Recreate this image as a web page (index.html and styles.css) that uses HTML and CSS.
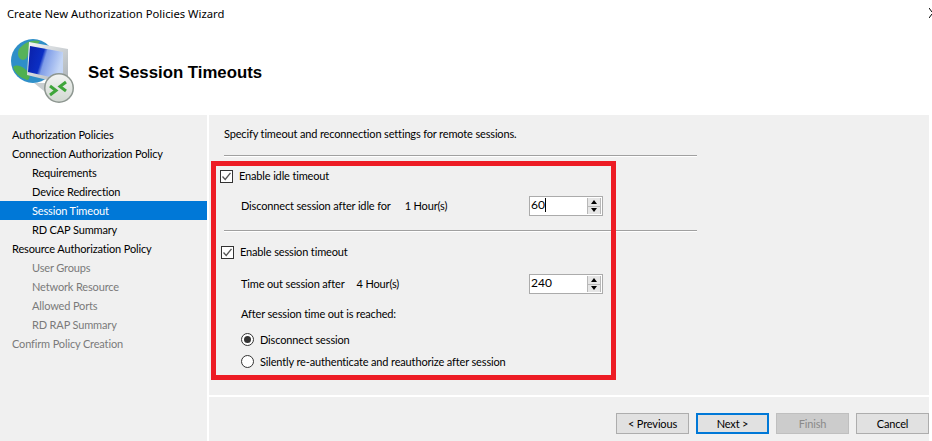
FILE: index.html
```html
<!DOCTYPE html>
<html lang="en">
<head>
    <meta charset="UTF-8">
    <meta name="viewport" content="width=device-width, initial-scale=1.0">
    <title>Create New Authorization Policies Wizard</title>
    <link rel="stylesheet" href="styles.css">
</head>
<body>
<div class="wizard">
    <div class="titlebar">
        <span>Create New Authorization Policies Wizard</span>
        <svg class="close" width="3" height="12" viewBox="0 0 3 12"><path d="M0 0 L3 4 M0 10 L3 6" stroke="#000" fill="none"/></svg>
    </div>
    <div class="header">
        <svg class="logo" width="66" height="66" viewBox="0 0 66 66">
            <defs>
                <linearGradient id="screen" x1="0" y1="0" x2="1" y2="0.3">
                    <stop offset="0" stop-color="#0a1fa8"/>
                    <stop offset="0.45" stop-color="#0b2fc4"/>
                    <stop offset="0.55" stop-color="#7f9de8"/>
                    <stop offset="1" stop-color="#c4d6f6"/>
                </linearGradient>
                <linearGradient id="frame" x1="0" y1="0" x2="1" y2="1">
                    <stop offset="0" stop-color="#f4f6f8"/>
                    <stop offset="1" stop-color="#a9b0b5"/>
                </linearGradient>
                <linearGradient id="ring" x1="0" y1="0" x2="0" y2="1">
                    <stop offset="0" stop-color="#f2f4f2"/>
                    <stop offset="1" stop-color="#d2d8d2"/>
                </linearGradient>
            </defs>
            <circle cx="23" cy="22" r="22" fill="#2f8fc8"/>
            <path d="M9 10 C14 3 23 0 30 2 C26 8 24 8 19 10 C17 15 19 20 13 21 C8 20 7 15 9 10 Z" fill="#57b25a"/>
            <path d="M3 28 C8 24 15 29 19 34 C21 39 18 43 15 40 C9 38 5 34 3 28 Z" fill="#4fb04f"/>
            <path d="M24 44 L34 52 L48 58 L46 50 L38 44 Z" fill="#c9ced0"/>
            <path d="M19 3 L58 10 L58 46 L17 36 Z" fill="url(#frame)"/>
            <path d="M20 7 L53 13 L53 41 L18 33 Z" fill="url(#screen)"/>
            <circle cx="49" cy="49" r="15" fill="#8d9690"/>
            <circle cx="49" cy="49" r="13.5" fill="url(#ring)"/>
            <path d="M40 47 L46 51.5 L40 56 M56 43 L50 47.5 L56 52" stroke="#3ea53a" stroke-width="3" fill="none"/>
        </svg>
        <h1>Set Session Timeouts</h1>
    </div>
    <div class="body">
        <ul class="steps">
            <li>Authorization Policies</li>
            <li>Connection Authorization Policy</li>
            <li class="sub">Requirements</li>
            <li class="sub">Device Redirection</li>
            <li class="sub selected">Session Timeout</li>
            <li class="sub">RD CAP Summary</li>
            <li>Resource Authorization Policy</li>
            <li class="sub muted">User Groups</li>
            <li class="sub muted">Network Resource</li>
            <li class="sub muted">Allowed Ports</li>
            <li class="sub muted">RD RAP Summary</li>
            <li class="muted">Confirm Policy Creation</li>
        </ul>
        <div class="right">
            <div class="content">
                <p class="intro">Specify timeout and reconnection settings for remote sessions.</p>
                <div class="sep"></div>
                <label class="check first">
                    <span class="box"><svg width="11" height="11" viewBox="0 0 11 11"><path d="M1.5 5.5 L4.2 8.5 L9.5 1.8" stroke="#555" stroke-width="1.3" fill="none"/></svg></span>
                    <span class="lift">Enable idle timeout</span>
                </label>
                <div class="row idle">
                    <span class="lift">Disconnect session after idle for</span>
                    <span class="hours lift">1 Hour(s)</span>
                    <div class="spin">
                        <div class="spin-value">60<span class="caret"></span></div>
                        <div class="spin-btns">
                            <span class="spin-btn"><i class="up"></i></span>
                            <span class="spin-btn"><i class="down"></i></span>
                        </div>
                    </div>
                </div>
                <div class="sep second"></div>
                <label class="check next">
                    <span class="box"><svg width="11" height="11" viewBox="0 0 11 11"><path d="M1.5 5.5 L4.2 8.5 L9.5 1.8" stroke="#555" stroke-width="1.3" fill="none"/></svg></span>
                    <span class="lift">Enable session timeout</span>
                </label>
                <div class="row session">
                    <span class="lift">Time out session after</span>
                    <span class="hours lift">4 Hour(s)</span>
                    <div class="spin">
                        <div class="spin-value">240</div>
                        <div class="spin-btns">
                            <span class="spin-btn"><i class="up"></i></span>
                            <span class="spin-btn"><i class="down"></i></span>
                        </div>
                    </div>
                </div>
                <p class="after">After session time out is reached:</p>
                <label class="radio r1"><span class="dot on"></span>Disconnect session</label>
                <label class="radio r2"><span class="dot"></span>Silently re-authenticate and reauthorize after session</label>
                <div class="redbox"></div>
            </div>
            <div class="footer">
                <button>&lt; Previous</button>
                <button class="default">Next &gt;</button>
                <button class="disabled">Finish</button>
                <button>Cancel</button>
            </div>
        </div>
    </div>
</div>
</body>
</html>
```

FILE: styles.css
```css
* {
    box-sizing: border-box;
}
html, body {
    margin: 0;
    height: 100%;
    background: #fff;
    overflow: hidden;
}
body {
    font-family: Lato, "Noto Sans", sans-serif;
    font-size: 11px;
    letter-spacing: -0.15px;
    color: #000;
}
.wizard {
    width: 932px;
    height: 441px;
    display: flex;
    flex-direction: column;
}
.titlebar {
    height: 28px;
    padding-left: 7px;
    display: flex;
    justify-content: space-between;
    align-items: center;
    font-family: "Noto Sans", sans-serif;
    font-size: 11.25px;
    letter-spacing: 0;
    line-height: 28px;
}
.close {
    margin-bottom: 1px;
}
.header {
    height: 87px;
    display: flex;
    align-items: flex-start;
    padding: 11px 0 0 10px;
}
.logo {
    flex: none;
}
.header h1 {
    margin: 23px 0 0 12px;
    font-family: "Liberation Sans", Arial, sans-serif;
    font-size: 16.8px;
    font-weight: bold;
    letter-spacing: 0;
    line-height: 22px;
    color: #000;
}
.body {
    flex: 1;
    display: flex;
    gap: 2px;
}
.steps {
    width: 207px;
    margin: 0;
    padding: 10px 0 0;
    list-style: none;
    background: #f0f0f0;
}
.steps li {
    height: 19px;
    line-height: 19px;
    padding-left: 12px;
}
.steps .sub {
    padding-left: 32px;
}
.steps .muted {
    color: #7a7a7a;
}
.steps .selected {
    background: #0078d7;
    color: #fff;
}
.right {
    width: 720px;
    display: flex;
    flex-direction: column;
    gap: 2px;
}
.content {
    position: relative;
    height: 280px;
    padding: 10px 0 0 15px;
    background: #f0f0f0;
}
.intro, .after {
    margin: 0;
    line-height: 18px;
}
.sep {
    width: 473px;
    height: 2px;
    margin-top: 12px;
    background: #a0a0a0;
    border-bottom: 1px solid #fff;
}
.sep.second {
    margin-top: 14px;
}
.check {
    height: 19px;
    display: flex;
    align-items: center;
    gap: 6px;
}
.check.first {
    margin: 10px 0 0 -4px;
}
.check.next {
    margin: 11px 0 0 -3px;
}
.lift {
    padding-bottom: 2px;
}
.box {
    width: 13px;
    height: 13px;
    border: 1px solid #333;
    background: #fff;
    display: flex;
    align-items: center;
    justify-content: center;
}
.row {
    height: 20px;
    padding-left: 17px;
    display: flex;
    align-items: center;
}
.row.idle {
    margin-top: 10px;
}
.row.session {
    margin-top: 12px;
}
.hours {
    margin-left: 14px;
}
.session .hours {
    margin-left: 12px;
}
.spin {
    width: 74px;
    height: 20px;
    margin-left: auto;
    margin-right: 326px;
    display: flex;
    border: 1px solid #ababab;
    background: #fff;
}
.spin-value {
    flex: 1;
    padding-left: 1px;
    line-height: 16px;
    font-size: 12px;
    letter-spacing: 0;
}
.caret {
    display: inline-block;
    width: 1px;
    height: 14px;
    background: #000;
    vertical-align: -3px;
}
.spin-btns {
    width: 14px;
    margin: 1px 1px 1px 0;
    display: flex;
    flex-direction: column;
    gap: 1px;
    background: #b8b8b8;
}
.spin-btn {
    height: 8px;
    margin: 0 1px;
    background: #e6e6e6;
    display: flex;
    align-items: center;
    justify-content: center;
}
.spin-btn i {
    width: 0;
    height: 0;
    border-left: 3.5px solid transparent;
    border-right: 3.5px solid transparent;
}
.spin-btn .up {
    border-bottom: 4px solid #000;
}
.spin-btn .down {
    border-top: 4px solid #000;
}
.after {
    margin: 10px 0 0 17px;
    line-height: 19px;
}
.radio {
    height: 19px;
    margin-left: 17px;
    display: flex;
    align-items: center;
    gap: 6px;
}
.radio.r1 {
    margin-top: 7px;
}
.radio.r2 {
    margin-top: 3px;
}
.dot {
    width: 13px;
    height: 13px;
    border: 1px solid #333;
    border-radius: 50%;
    background: #fff;
    display: flex;
    align-items: center;
    justify-content: center;
}
.dot.on::after {
    content: "";
    width: 7px;
    height: 7px;
    border-radius: 50%;
    background: #333;
}
.redbox {
    position: absolute;
    left: 2px;
    top: 46px;
    width: 405px;
    height: 219px;
    border: 5px solid #ed1c24;
}
.footer {
    height: 44px;
    padding: 16px 0 0 407px;
    display: flex;
    gap: 7px;
    background: #f0f0f0;
}
.footer button {
    width: 73px;
    height: 21px;
    padding: 0;
    font-family: inherit;
    font-size: 11px;
    letter-spacing: -0.15px;
    color: #000;
    background: #e1e1e1;
    border: 1px solid #adadad;
}
.footer .default {
    border: 2px solid #0078d7;
}
.footer .disabled {
    background: #cccccc;
    border-color: #bfbfbf;
    color: #8a8a8a;
}
```
